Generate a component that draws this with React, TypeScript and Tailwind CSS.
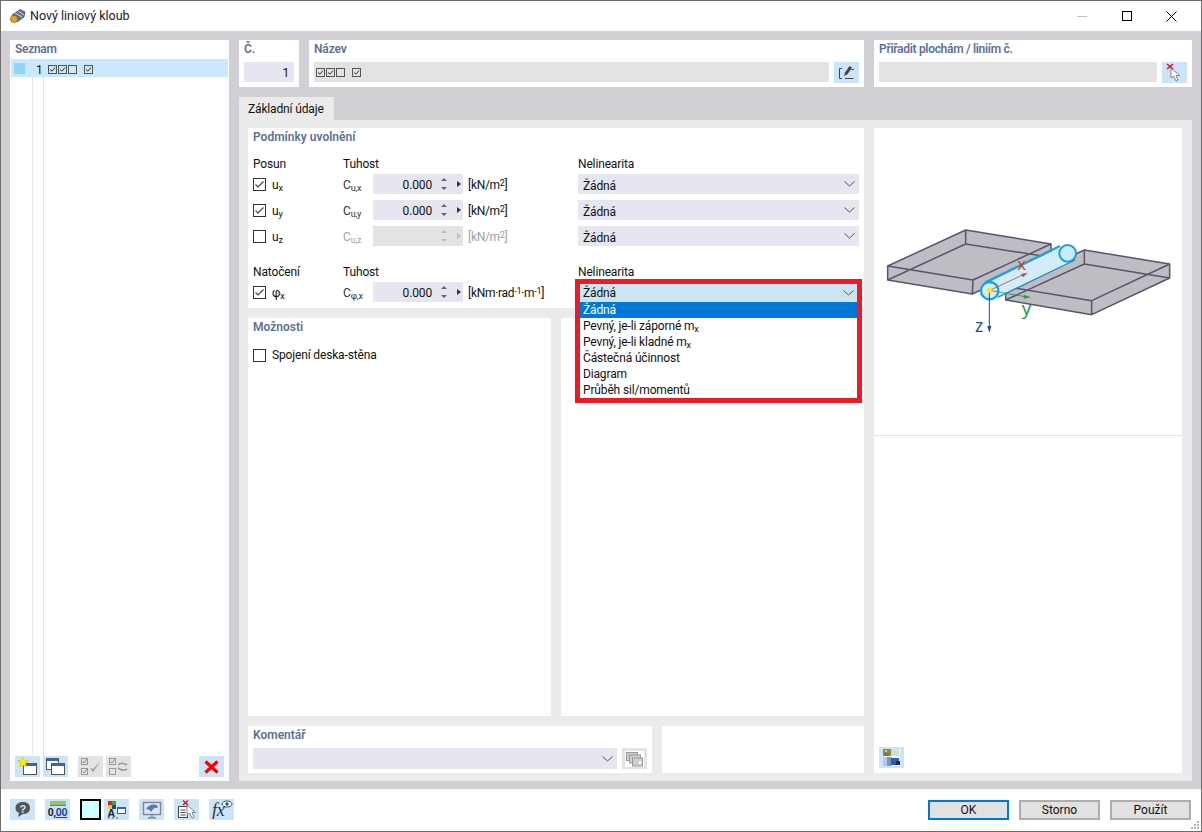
import React from "react";

const Sub = ({ children }: { children: React.ReactNode }) => (
  <span className="text-[9px] relative top-[2px] leading-none">{children}</span>
);
const Sup = ({ children }: { children: React.ReactNode }) => (
  <span className="text-[9px] relative top-[-3px] leading-none">{children}</span>
);

const Title = ({ children }: { children: React.ReactNode }) => (
  <div className="h-[18px] leading-[18px] font-semibold text-[#5d6f99] tracking-normal">{children}</div>
);

const Check = ({ on }: { on?: boolean }) => (
  <span className="w-[13px] h-[13px] border border-[#333] bg-white shrink-0 flex items-center justify-center">
    {on && (
      <svg width="11" height="11" viewBox="0 0 11 11">
        <path d="M1.5 5.5 L4 8 L9.5 2.5" fill="none" stroke="#444" strokeWidth="1.1" />
      </svg>
    )}
  </span>
);

const Mini = ({ on }: { on?: boolean }) => (
  <span className="w-[9px] h-[9px] border border-[#555] flex items-center justify-center shrink-0">
    {on && (
      <svg width="7" height="7" viewBox="0 0 7 7">
        <path d="M1 3.5 L3 5.2 L6 1.5" fill="none" stroke="#333" strokeWidth="1" />
      </svg>
    )}
  </span>
);

const MiniSet = () => (
  <span className="flex items-center">
    <Mini on />
    <span className="w-px" />
    <Mini on />
    <span className="w-px" />
    <Mini />
    <span className="w-[7px]" />
    <Mini on />
  </span>
);

const Chevron = () => (
  <svg width="11" height="6" viewBox="0 0 11 6" className="shrink-0">
    <path d="M0.5 0.5 L5.5 5 L10.5 0.5" fill="none" stroke="#555" strokeWidth="1" />
  </svg>
);

const Combo = () => (
  <div className="h-[20px] w-[281px] bg-[#e6e6f1] flex items-center justify-between pl-[5px] pr-[4px]">
    <span className="pt-[3px]">Žádná</span>
    <Chevron />
  </div>
);

const Num = ({ disabled }: { disabled?: boolean }) => (
  <div className={`h-[20px] w-[90px] flex items-center ${disabled ? "bg-[#e3e3e3]" : "bg-[#e6e6f1]"}`}>
    <span className="w-[59px] text-right pt-[2px]">{disabled ? "" : "0.000"}</span>
    <svg width="26" height="14" viewBox="0 0 26 14" className="ml-[4px]">
      <path d="M5 4 L8 1 L11 4 Z M5 10 L8 13 L11 10 Z" fill={disabled ? "#bbb" : "#666"} />
      <path d="M21 4 L25 7 L21 10 Z" fill={disabled ? "#bbb" : "#333"} />
    </svg>
  </div>
);

const Row = ({
  on,
  label,
  sym,
  unit,
  disabled,
}: {
  on?: boolean;
  label: React.ReactNode;
  sym: React.ReactNode;
  unit: React.ReactNode;
  disabled?: boolean;
}) => (
  <div className="grid grid-cols-[90px_30px_90px_115px_281px] h-[20px] items-center">
    <div className="flex items-center gap-[6px]">
      <Check on={on} />
      <span className="pt-[1px]">{label}</span>
    </div>
    <span className={`pt-[1px] ${disabled ? "text-[#a0a0a0]" : "text-[#333]"}`}>{sym}</span>
    <Num disabled={disabled} />
    <span className={`pl-[5px] pt-[1px] tracking-[-0.3px] ${disabled ? "text-[#a0a0a0]" : ""}`}>{unit}</span>
    <Combo />
  </div>
);

const Head = ({ a, className }: { a: string; className: string }) => (
  <div className={`grid grid-cols-[90px_120px_115px_281px] h-[16px] leading-[18px] ${className}`}>
    <span>{a}</span>
    <span>Tuhost</span>
    <span />
    <span>Nelinearita</span>
  </div>
);

const Btn = ({ children, gray }: { children: React.ReactNode; gray?: boolean }) => (
  <div className={`w-[25px] h-[21px] shrink-0 flex items-center justify-center ${gray ? "bg-[#e3e3e3]" : "bg-[#cce4f7]"}`}>
    {children}
  </div>
);

const IconNew = () => (
  <svg width="21" height="19" viewBox="0 0 21 19">
    <rect x="6.5" y="6.5" width="13" height="11" fill="#fff" stroke="#555" />
    <rect x="7" y="6" width="12" height="3" fill="#3f63a8" />
    <path d="M6 0 L7.6 3.5 L11.5 3.8 L8.5 6.2 L9.5 10 L6 8 L2.5 10 L3.5 6.2 L0.5 3.8 L4.4 3.5 Z" fill="#ffee00" stroke="#c9b400" strokeWidth="0.5" />
  </svg>
);
const IconCopy = () => (
  <svg width="21" height="19" viewBox="0 0 21 19">
    <rect x="1.5" y="1.5" width="12" height="11" fill="#fff" stroke="#555" />
    <rect x="2" y="1" width="11" height="3" fill="#3f63a8" />
    <rect x="6.5" y="6.5" width="13" height="11" fill="#fff" stroke="#555" />
    <rect x="7" y="6" width="12" height="3" fill="#3f63a8" />
  </svg>
);
const IconChecks = () => (
  <svg width="21" height="19" viewBox="0 0 21 19">
    <rect x="1.5" y="1.5" width="6" height="6" fill="none" stroke="#999" />
    <rect x="1.5" y="11.5" width="6" height="6" fill="none" stroke="#999" />
    <path d="M2.5 4.5 L4 6 L7 2 M2.5 14.5 L4 16 L7 12" fill="none" stroke="#888" />
    <path d="M10 11 L13 15 L20 5 L13 12 Z" fill="#999" />
  </svg>
);
const IconChecks2 = () => (
  <svg width="21" height="19" viewBox="0 0 21 19">
    <rect x="1.5" y="1.5" width="6" height="6" fill="none" stroke="#999" />
    <rect x="1.5" y="11.5" width="6" height="6" fill="none" stroke="#999" />
    <path d="M2.5 4.5 L4 6 L7 2" fill="none" stroke="#888" />
    <path d="M10 8 C13 5 16 6 19 8 M19 12 C16 14 13 13 10 11" fill="none" stroke="#999" strokeWidth="1.6" />
  </svg>
);
const IconX = () => (
  <svg width="15" height="14" viewBox="0 0 15 14">
    <path d="M1.5 1.5 L13.5 12.5 M13.5 1.5 L1.5 12.5" stroke="#f00" strokeWidth="3.2" />
  </svg>
);
const IconEdit = () => (
  <svg width="17" height="15" viewBox="0 0 17 15">
    <path d="M4 3.5 H1.5 V13.5 H4 M7 13.5 H15.5" fill="none" stroke="#444" strokeWidth="1" />
    <path d="M6 11 L7 7.5 L11.5 1 L14 2.7 L9.5 9.3 Z" fill="#444" />
    <path d="M13.5 4.5 H16" stroke="#444" />
  </svg>
);
const IconPick = () => (
  <svg width="19" height="19" viewBox="0 0 19 19">
    <path d="M2 1 L8 6 M8 1 L2 6" stroke="#e8001c" strokeWidth="1.4" />
    <path d="M6 5 L6 15 L8.6 13 L11 18 L13 17 L11 12.5 L14.5 12.5 Z" fill="#fff" stroke="#777" strokeWidth="0.9" />
  </svg>
);
const IconHelp = () => (
  <svg width="19" height="17" viewBox="0 0 19 17">
    <path d="M10 1 C14.5 1 17 3.5 17 7 C17 11 14 13 10 13 L5 16 L6 12 C3.5 11 2.5 9 2.5 7 C2.5 3.5 5.5 1 10 1 Z" fill="#555" />
    <text x="9.8" y="11.5" textAnchor="middle" fontSize="11" fontWeight="700" fill="#cce4f7" fontFamily="'Liberation Sans', sans-serif">?</text>
  </svg>
);
const IconNums = () => (
  <div className="w-[19px] flex flex-col items-center">
    <div className="w-[16px] h-[5px] bg-[#8fc46a] border-b border-[#5f8f3f]" />
    <div className="text-[10.5px] font-bold leading-[12px] text-[#222] tracking-[-0.3px] mt-[1px]">
      0,<span className="text-[#1d3fa8] underline">00</span>
    </div>
  </div>
);
const IconScheme = () => (
  <svg width="21" height="19" viewBox="0 0 21 19">
    <rect x="2" y="1" width="4" height="4" fill="#e02020" />
    <rect x="6" y="1" width="4" height="4" fill="#3ba03b" />
    <rect x="2" y="5" width="4" height="4" fill="#f0d020" />
    <rect x="6" y="5" width="4" height="4" fill="#2040c0" />
    <text x="1.5" y="16.5" fontSize="10.5" fontWeight="700" fill="#222" fontFamily="'Liberation Sans', sans-serif">A</text>
    <rect x="11.5" y="7.5" width="8" height="6" fill="#fff" stroke="#555" />
    <rect x="12" y="7" width="7" height="2" fill="#3f63a8" />
    <path d="M2 18 H4 M6 18 H8 M10 18 H12" stroke="#555" />
  </svg>
);
const IconMonitor = () => (
  <svg width="20" height="18" viewBox="0 0 20 18">
    <rect x="1.5" y="1.5" width="17" height="12" fill="#dfe6ef" stroke="#7c8794" strokeWidth="1.4" />
    <path d="M4 8 C6 4 11 2.5 15 4 L16 7 C13 6 11 7.5 9 11 C8.5 9 6 8 4 8 Z" fill="#4f7fb5" />
    <path d="M10 14 V16 M6 16.8 H14" stroke="#7c8794" strokeWidth="1.4" />
  </svg>
);
const IconDocPick = () => (
  <svg width="21" height="19" viewBox="0 0 21 19">
    <path d="M7 0.5 L12 5 M12 0.5 L7 5" stroke="#e8001c" strokeWidth="1.3" />
    <rect x="2.5" y="6.5" width="9" height="11" fill="#fff" stroke="#444" />
    <path d="M4.5 10 H9.5 M4.5 12.5 H9.5 M4.5 15 H9.5" stroke="#444" />
    <path d="M11 5 L11 15 L13.5 13 L16 18 L18 17 L16 12.5 L19.5 12.5 Z" fill="#fff" stroke="#777" strokeWidth="0.9" />
  </svg>
);
const IconFx = () => (
  <svg width="22" height="19" viewBox="0 0 22 19">
    <text x="1" y="16" fontSize="18" fontStyle="italic" fill="#333" fontFamily="'Liberation Serif', serif">fx</text>
    <ellipse cx="16" cy="4" rx="5" ry="3" fill="#fff" stroke="#2b4f9c" />
    <circle cx="16" cy="4" r="1.7" fill="#2b4f9c" />
  </svg>
);
const IconStack = () => (
  <svg width="19" height="16" viewBox="0 0 19 16" className="bg-white">
    <rect x="1.5" y="1.5" width="11" height="8" fill="#cfcfcf" stroke="#999" />
    <rect x="4.5" y="4" width="11" height="8" fill="#cfcfcf" stroke="#999" />
    <rect x="7.5" y="7" width="10" height="8" fill="#cfcfcf" stroke="#999" />
    <rect x="14" y="10" width="2" height="3" fill="#fff" />
  </svg>
);
const IconGrid = () => (
  <svg width="17" height="17" viewBox="0 0 17 17" className="bg-white">
    <rect x="0" y="0" width="8" height="7" fill="#7a8f52" />
    <rect x="2" y="1" width="2" height="2" fill="#e4e04a" />
    <rect x="1" y="4" width="5" height="3" fill="#a9663a" />
    <rect x="8" y="0" width="8" height="7" fill="#cfe0cf" />
    <rect x="0" y="8" width="9" height="9" fill="#b9c6de" />
    <rect x="4" y="8" width="4" height="9" fill="#7a94c4" />
    <rect x="8" y="9" width="8" height="7" fill="#2f5fa8" />
    <rect x="13" y="12" width="4" height="4" fill="#1f2f55" />
  </svg>
);

const SlabDrawing = () => (
  <svg width="310" height="130" viewBox="0 0 930 390">
    <g stroke="#56566a" strokeWidth="4.5" strokeLinejoin="round">
      <path d="M38 138 L272 30 L528 72 L528 112 L292 222 L38 180 Z" fill="#bebdc3" />
      <path d="M38 138 L294 180 L528 72 M294 180 L292 222 M38 180 L272 72 L528 112 M272 30 L272 72" fill="none" />
      <path d="M392 200 L628 90 L884 132 L884 174 L650 284 L392 240 Z" fill="#bebdc3" />
      <path d="M392 200 L650 242 L884 132 M650 242 L650 284 M392 240 L628 132 L884 174 M628 90 L628 132" fill="none" />
    </g>
    <path d="M340 188 L560 80 L595 122 L368 230 Z" fill="#d3ecf8" />
    <circle cx="578" cy="100" r="25" fill="#cfe8f5" stroke="#1ba1dc" strokeWidth="6" />
    <path d="M330 188 L555 78" stroke="#1ba1dc" strokeWidth="7" />
    <path d="M368 232 L600 120" stroke="#1b8fc4" strokeWidth="4" />
    <circle cx="344" cy="212" r="26" fill="#d3ecf8" stroke="#1ba1dc" strokeWidth="7" />
    <path d="M344 211 L445 164" stroke="#b8502c" strokeWidth="2.5" />
    <path d="M458 158 L438 162 L444 172 Z" fill="#b8502c" />
    <path d="M344 211 L450 230" stroke="#1f9a4a" strokeWidth="2.5" />
    <path d="M468 232 L446 224 L446 236 Z" fill="#1f9a4a" />
    <path d="M343 211 L343 322" stroke="#1d47b8" strokeWidth="3" />
    <path d="M343 338 L337 318 L349 318 Z" fill="#1d47b8" />
    <circle cx="344" cy="211" r="8" fill="#ffdf1a" />
    <text x="427" y="150" fontSize="50" fill="#c4401c" fontFamily="'Noto Sans', sans-serif">x</text>
    <text x="440" y="284" fontSize="56" fill="#1f9a4a" fontFamily="'Noto Sans', sans-serif">y</text>
    <text x="300" y="337" fontSize="52" fill="#1d47b8" fontFamily="'Noto Sans', sans-serif">z</text>
  </svg>
);

const items: React.ReactNode[] = [
  "Žádná",
  <>Pevný, je-li záporné m<Sub>x</Sub></>,
  <>Pevný, je-li kladné m<Sub>x</Sub></>,
  "Částečná účinnost",
  "Diagram",
  "Průběh sil/momentů",
];

export default function App() {
  return (
    <div className="w-[1202px] h-[832px] flex flex-col bg-white border border-[#6e6e6e] text-[12px] tracking-[-0.15px] text-[#111] font-['Roboto','Noto_Sans',sans-serif] overflow-hidden">
      {/* title bar */}
      <div className="h-[30px] shrink-0 flex items-center pl-[8px]">
        <svg width="17" height="16" viewBox="0 0 17 16">
          <path d="M3 7 L11 1.5 L16 4 L15 9 L8 14 Z" fill="#66738a" stroke="#3d4654" strokeWidth="0.7" />
          <path d="M6 5 L13 9 M9 3 L15 7" stroke="#d5d9e0" strokeWidth="1" />
          <circle cx="5" cy="11" r="3.6" fill="#e0a526" stroke="#7a5a10" strokeWidth="0.6" />
        </svg>
        <span className="ml-[4px] text-[#222] text-[12.5px] tracking-normal">Nový liniový kloub</span>
        <div className="ml-auto flex items-center">
          <span className="w-[45px] flex justify-center">
            <span className="w-[10px] h-px bg-[#c4c4c4]" />
          </span>
          <span className="w-[45px] flex justify-center">
            <span className="w-[10px] h-[10px] border border-black" />
          </span>
          <span className="w-[45px] flex justify-center mr-[7px]">
            <svg width="11" height="11" viewBox="0 0 11 11">
              <path d="M0.5 0.5 L10.5 10.5 M10.5 0.5 L0.5 10.5" stroke="#000" strokeWidth="1" />
            </svg>
          </span>
        </div>
      </div>

      {/* body */}
      <div className="h-[758px] shrink-0 bg-[#d0cfd4] flex pl-[9px] pr-[9px] pt-[9px] pb-[8px] gap-[10px]">
        {/* list */}
        <div className="w-[219px] bg-white flex flex-col px-[1px]">
          <div className="h-[19px] leading-[18px] pl-[4px] font-semibold text-[#5d6f99] tracking-[-0.3px]">Seznam</div>
          <div className="h-[18px] bg-[#cce8ff] flex items-center pl-[3px]">
            <span className="w-[11px] h-[11px] bg-[#91d6f9]" />
            <span className="ml-[11px] w-[5px] mt-[3px]">1</span>
            <span className="ml-[7px] mt-[3px]"><MiniSet /></span>
          </div>
          <div className="flex-1 flex pl-[21px]">
            <div className="w-[12px] border-l border-[#e8e8e8] border-r h-full" />
          </div>
          <div className="h-[25px] flex items-start pl-[4px] pr-[4px] pb-[4px]">
            <Btn><IconNew /></Btn>
            <span className="w-[3px]" />
            <Btn><IconCopy /></Btn>
            <span className="w-[10px]" />
            <Btn gray><IconChecks /></Btn>
            <span className="w-[3px]" />
            <Btn gray><IconChecks2 /></Btn>
            <span className="ml-auto"><Btn><IconX /></Btn></span>
          </div>
        </div>

        {/* main */}
        <div className="w-[953px] flex flex-col">
          <div className="h-[47px] flex gap-[10px] shrink-0">
            <div className="w-[60px] bg-white px-[5px]">
              <div className="h-[22px] leading-[18px] font-semibold text-[#5d6f99]">Č.</div>
              <div className="h-[20px] bg-[#e6e6f1] text-right pr-[5px] leading-[22px]">1</div>
            </div>
            <div className="w-[555px] bg-white pl-[5px]">
              <div className="h-[22px] leading-[18px] font-semibold text-[#5d6f99]">Název</div>
              <div className="flex gap-[5px]">
                <div className="w-[515px] h-[20px] bg-[#e3e3e3] flex items-center pl-[2px]"><MiniSet /></div>
                <Btn><IconEdit /></Btn>
              </div>
            </div>
            <div className="w-[318px] bg-white pl-[5px]">
              <div className="h-[22px] leading-[18px] font-semibold text-[#5d6f99] tracking-[-0.3px]">Přiřadit plochám / liniím č.</div>
              <div className="flex gap-[5px]">
                <div className="w-[278px] h-[20px] bg-[#e3e3e3]" />
                <Btn><IconPick /></Btn>
              </div>
            </div>
          </div>

          <div className="mt-[10px] h-[23px] w-[95px] bg-[#ebebeb] pl-[9px] leading-[25px] shrink-0">Základní údaje</div>

          <div className="flex-1 bg-[#ebebeb] pl-[9px] pr-[10px] py-[8px] flex gap-[10px]">
            <div className="w-[616px] flex flex-col gap-[10px]">
              {/* release panel */}
              <div className="relative h-[180px] bg-white pl-[5px]">
                <Title>Podmínky uvolnění</Title>
                <Head a="Posun" className="mt-[9px]" />
                <div className="mt-[3px] flex flex-col gap-[6px]">
                  <Row on label={<>u<Sub>x</Sub></>} sym={<>C<Sub>u,x</Sub></>} unit={<>[kN/m<Sup>2</Sup>]</>} />
                  <Row on label={<>u<Sub>y</Sub></>} sym={<>C<Sub>u,y</Sub></>} unit={<>[kN/m<Sup>2</Sup>]</>} />
                  <Row disabled label={<>u<Sub>z</Sub></>} sym={<>C<Sub>u,z</Sub></>} unit={<>[kN/m<Sup>2</Sup>]</>} />
                </div>
                <Head a="Natočení" className="mt-[17px]" />
                <div className="mt-[3px]">
                  <Row on label={<>φ<Sub>x</Sub></>} sym={<>C<Sub>φ,x</Sub></>} unit={<>[kNm·rad<Sup>-1</Sup>·m<Sup>-1</Sup>]</>} />
                </div>

                {/* open dropdown with red frame */}
                <div className="absolute left-[327px] top-[151px] w-[287px] h-[124px] border-[5px] border-[#ed1c24] bg-white z-10">
                  <div className="h-[18px] bg-[#cce4f7] flex items-center justify-between pl-[3px] pr-[3px]">
                    <span>Žádná</span>
                    <Chevron />
                  </div>
                  {items.map((it, i) => (
                    <div
                      key={i}
                      className={`h-[16px] leading-[16px] pl-[3px] ${i === 0 ? "bg-[#0078d7] text-white" : ""}`}
                    >
                      {it}
                    </div>
                  ))}
                </div>
              </div>

              <div className="h-[398px] flex gap-[10px]">
                <div className="w-[303px] bg-white pl-[5px]">
                  <Title>Možnosti</Title>
                  <div className="mt-[10px] flex items-center gap-[6px] h-[18px]">
                    <Check />
                    <span>Spojení deska-stěna</span>
                  </div>
                </div>
                <div className="w-[303px] bg-white" />
              </div>

              <div className="h-[47px] flex gap-[10px]">
                <div className="w-[404px] bg-white pl-[5px]">
                  <Title>Komentář</Title>
                  <div className="mt-[4px] flex gap-[5px]">
                    <div className="w-[364px] h-[21px] bg-[#e6e6f1] flex items-center justify-end pr-[4px]">
                      <Chevron />
                    </div>
                    <Btn gray><IconStack /></Btn>
                  </div>
                </div>
                <div className="w-[202px] bg-white" />
              </div>
            </div>

            {/* preview */}
            <div className="w-[308px] bg-white flex flex-col">
              <div className="h-[308px] border-b border-[#e3e3e3] pt-[92px] pl-[1px] shrink-0">
                <SlabDrawing />
              </div>
              <div className="flex-1 flex items-end pl-[5px] pb-[5px]">
                <Btn><IconGrid /></Btn>
              </div>
            </div>
          </div>
        </div>
      </div>

      {/* footer */}
      <div className="relative flex-1 flex items-start pt-[10px] pl-[9px] pr-[10px]">
        <Btn><IconHelp /></Btn>
        <span className="w-[10px]" />
        <Btn><IconNums /></Btn>
        <span className="w-[10px]" />
        <span className="w-[21px] h-[21px] border-2 border-black bg-[#ccffff]" />
        <span className="w-[3px]" />
        <Btn><IconScheme /></Btn>
        <span className="w-[10px]" />
        <Btn><IconMonitor /></Btn>
        <span className="w-[10px]" />
        <Btn><IconDocPick /></Btn>
        <span className="w-[10px]" />
        <Btn><IconFx /></Btn>
        <div className="ml-auto flex gap-[10px] mt-[1px] tracking-normal">
          <div className="w-[81px] h-[20px] border-2 border-[#0078d7] bg-[#e1e1e1] flex items-center justify-center">OK</div>
          <div className="w-[81px] h-[20px] border-2 border-[#adadad] bg-[#e1e1e1] flex items-center justify-center">Storno</div>
          <div className="w-[81px] h-[20px] border-2 border-[#adadad] bg-[#e1e1e1] flex items-center justify-center">Použít</div>
        </div>
        <svg width="10" height="10" viewBox="0 0 10 10" className="absolute right-[1px] bottom-[1px]">
          <path d="M7 1h2v2H7z M4 4h2v2H4z M7 4h2v2H7z M1 7h2v2H1z M4 7h2v2H4z M7 7h2v2H7z" fill="#b5b5b5" />
        </svg>
      </div>
    </div>
  );
}
